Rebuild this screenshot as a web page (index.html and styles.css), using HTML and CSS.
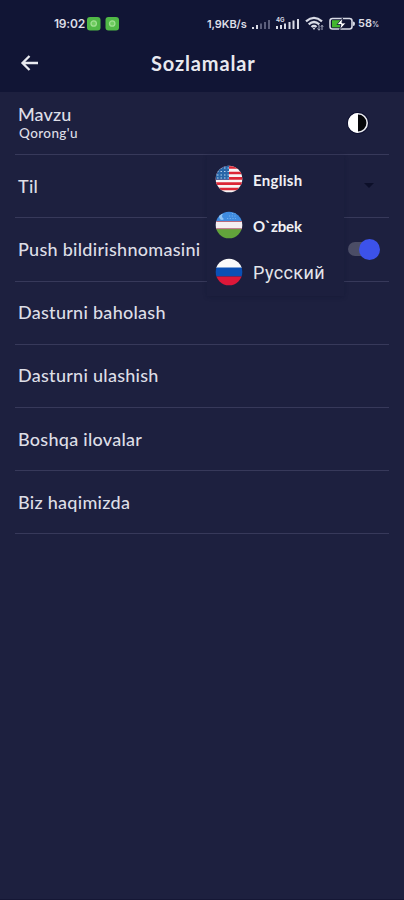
FILE: index.html
```
<!DOCTYPE html>
<html lang="uz">
<head>
<meta charset="utf-8">
<title>Sozlamalar</title>
<link rel="stylesheet" href="styles.css">
</head>
<body>
<header class="top">
  <div class="status">
    <span class="clock">19:02</span>
    <svg class="apps" width="34" height="16" viewBox="0 0 34 16">
      <rect x="1" y="1" width="13.500" height="13.500" rx="3" fill="#51b947"/>
      <rect x="19.500" y="1" width="13.500" height="13.500" rx="3" fill="#51b947"/>
      <g fill="#6fcc60" stroke="#9fdf91" stroke-width="1.300"><circle cx="7.700" cy="7.500" r="2.700"/><circle cx="26.200" cy="7.500" r="2.700"/></g>
    </svg>
    <span class="speed">1,9KB/s</span>
    <svg class="signals" width="50" height="18" viewBox="0 0 50 18">
      <g fill="#d8dae5">
        <path d="M2 12h2v2H2zM6 10h2v4H6z"/>
        <path d="M10 8.500h2V14h-2zM14 7h2v7h-2zM18 5h2v9h-2z" fill="#5b5e7b"/>
        <path d="M26 11h2v3h-2zM30 10h2v4h-2zM34 8.500h2V14h-2zM38.500 7h2v7h-2zM42.500 5.500h2V14h-2zM47 4h2v10h-2z"/>
      </g>
      <text class="net" x="26" y="7">4G</text>
    </svg>
    <svg class="wifi" width="20" height="16" viewBox="0 0 20 16">
      <g fill="none" stroke="#d8dae5" stroke-width="2.300"><path d="M1 5.300Q9 -1.500 17 5.300M3.700 8.300Q9 3.800 14.300 8.300M6.500 11Q9 8.800 11.500 11"/></g>
      <path d="M7.500 11.700h3L9 14z" fill="#d8dae5"/>
      <path d="M14 9v5m-1.500-1.500L14 14.300l1.200-1.500M17 14V9.500m-1.200 1.300L17 9.200l1.200 1.600" fill="none" stroke="#a8abbd" stroke-width="1"/>
    </svg>
    <svg class="battery" width="27" height="14" viewBox="0 0 27 14">
      <rect x="1" y="1.500" width="22" height="10.500" rx="2.500" fill="none" stroke="#d8dae5" stroke-width="1.600"/>
      <path d="M24 4.500q2 0 2 2.200T24 9z" fill="#d8dae5"/>
      <path d="M3 3.200h8v7.200H3z" fill="#43b62e"/>
      <path d="M13.500 1L8 7.500h4L10.500 13 17 6h-4z" fill="#fff" stroke="#111535" stroke-width=".8"/>
    </svg>
    <span class="percent">58<small>%</small></span>
  </div>
  <div class="bar">
    <svg class="back" width="20" height="20" viewBox="0 0 20 20"><path d="M18 10H3M9.500 3L2.500 10l7 7" fill="none" stroke="#e8e9ef" stroke-width="2.300"/></svg>
    <h1>Sozlamalar</h1>
  </div>
</header>
<main>
  <section class="row theme">
    <div class="labels"><span>Mavzu</span><small>Qorong'u</small></div>
    <svg class="contrast" width="24" height="24" viewBox="0 0 24 24"><circle cx="12" cy="12" r="11" fill="#0e1030"/><circle cx="12" cy="12" r="9.200" fill="#050609" stroke="#e9eaf0" stroke-width="1.600"/><path d="M12 2a10 10 0 0 0 0 20z" fill="#fff"/></svg>
  </section>
  <section class="row lang">
    <span>Til</span>
    <svg class="caret" width="12" height="6" viewBox="0 0 12 6"><path d="M1 0h10L6 5z" fill="#0c0f29"/></svg>
    <div class="menu">
      <div class="option">
        <svg width="28" height="28" viewBox="0 0 28 28">
          <clipPath id="us"><circle cx="14" cy="14" r="13.300"/></clipPath>
          <g clip-path="url(#us)"><path fill="#f7f5f5" d="M0 0h28v28H0z"/><path d="M0 2.500h28M0 8h28M0 13.300h28M0 18.700h28M0 24h28" stroke="#dc2636" stroke-width="2.700"/><path fill="#2867a9" d="M0 0h14v14.700H0z"/><path d="M2 3h12M2 6.500h12M2 10h12M2 13h12" stroke="#b4d1ec" stroke-width="1.200" stroke-dasharray="1.500 2"/></g>
        </svg><span class="english">English</span>
      </div>
      <div class="option">
        <svg width="28" height="28" viewBox="0 0 28 28">
          <clipPath id="uz"><circle cx="14" cy="14" r="13.300"/></clipPath>
          <g clip-path="url(#uz)"><path fill="#3f8bdf" d="M0 0h28v10H0z"/><path fill="#f5eff2" d="M0 10h28v8H0z"/><path fill="#62a43b" d="M0 18h28v10H0z"/><path d="M0 10.500h28M0 17.700h28" stroke="#b76a7d" stroke-width="1"/><path d="M8 3a3 3 0 1 0 1 5 3 3 0 0 1-1-5" fill="#8fc2f2"/><path d="M12 7.500h9M14 5h7M17 2.500h4" stroke="#74b0ee" stroke-width="1" stroke-dasharray="1.200 1.500"/></g>
        </svg><span class="uzbek">O`zbek</span>
      </div>
      <div class="option">
        <svg width="28" height="28" viewBox="0 0 28 28">
          <clipPath id="ru"><circle cx="14" cy="14" r="13.300"/></clipPath>
          <g clip-path="url(#ru)"><path fill="#fafafa" d="M0 0h28v10H0z"/><path fill="#0b50b5" d="M0 9.500h28v9H0z"/><path fill="#dc1739" d="M0 18.500h28V28H0z"/></g>
        </svg><span class="russian">Русский</span>
      </div>
    </div>
  </section>
  <section class="row"><span>Push bildirishnomasini</span><i class="switch"></i></section>
  <section class="row"><span>Dasturni baholash</span></section>
  <section class="row"><span>Dasturni ulashish</span></section>
  <section class="row"><span>Boshqa ilovalar</span></section>
  <section class="row"><span>Biz haqimizda</span></section>
</main>
</body>
</html>
```
FILE: styles.css
```
* { box-sizing: border-box; }
body {
  margin: 0;
  height: 900px;
  overflow: hidden;
  background: #1d203f;
  border-bottom: 1px solid #151735;
  color: #dddee6;
  font-family: Lato, "Open Sans", sans-serif;
}
svg { display: block; flex: none; }
.top { height: 92px; background: #111535; }
.status {
  height: 40px;
  padding: 7px 0 0 54px;
  display: flex;
  align-items: center;
  font: 600 12px/16px Inter, sans-serif;
  white-space: nowrap;
}
.clock { width: 32px; letter-spacing: -.2px; }
.speed { width: 43px; margin-left: 87px; font-size: 11px; letter-spacing: -.1px; }
.net { font: 700 6px Inter, sans-serif; fill: #d8dae5; }
.wifi { margin-left: 5px; }
.battery { margin-left: 4px; }
.percent { margin-left: 2px; font-size: 11px; }
.percent small { font-size: 7px; }
.bar { height: 46px; display: flex; align-items: center; padding-left: 20px; }
h1 {
  margin: -1px 0 0 111px;
  font-size: 20px;
  line-height: 26px;
  font-weight: 700;
  letter-spacing: .85px;
  color: #e8e9ef;
}
main { padding: 0 15px; }
.row {
  height: 63.200px;
  padding: 0 9px 0 3px;
  border-bottom: 1px solid #37395a;
  display: flex;
  align-items: center;
  justify-content: space-between;
  position: relative;
  font-size: 18px;
  line-height: 22px;
  font-weight: 500;
  letter-spacing: .28px;
  white-space: nowrap;
}
.row > span { padding-bottom: 1px; }
.labels { display: flex; flex-direction: column; padding-bottom: 1px; }
.labels span { letter-spacing: .1px; }
.labels small { font-size: 13.500px; line-height: 17px; padding-left: 1px; letter-spacing: .4px; }
.contrast { margin-right: 10px; }
.caret { margin-right: 5px; }
.menu {
  position: absolute;
  z-index: 2;
  left: 192px;
  top: 0;
  width: 137px;
  height: 141px;
  padding-left: 8px;
  background: #1c1f3e;
  box-shadow: 0 1px 4px rgba(14, 16, 43, .3);
}
.option { height: 46.800px; display: flex; align-items: center; gap: 10px; }
.english, .uzbek { padding-top: 2px; font: 700 15px/20px Lato, sans-serif; color: #f0f0f4; }
.uzbek { letter-spacing: -.1px; }
.russian { padding-top: 2px; font: 400 18px/22px Roboto, sans-serif; letter-spacing: .4px; color: #e4e5eb; }
.switch {
  width: 28px;
  height: 14px;
  margin-right: 4px;
  border-radius: 7px;
  background: #4b4d66;
  position: relative;
}
.switch::after {
  content: "";
  position: absolute;
  width: 21px;
  height: 21px;
  right: -4px;
  top: -3.500px;
  border-radius: 50%;
  background: #3c52ea;
}
```
